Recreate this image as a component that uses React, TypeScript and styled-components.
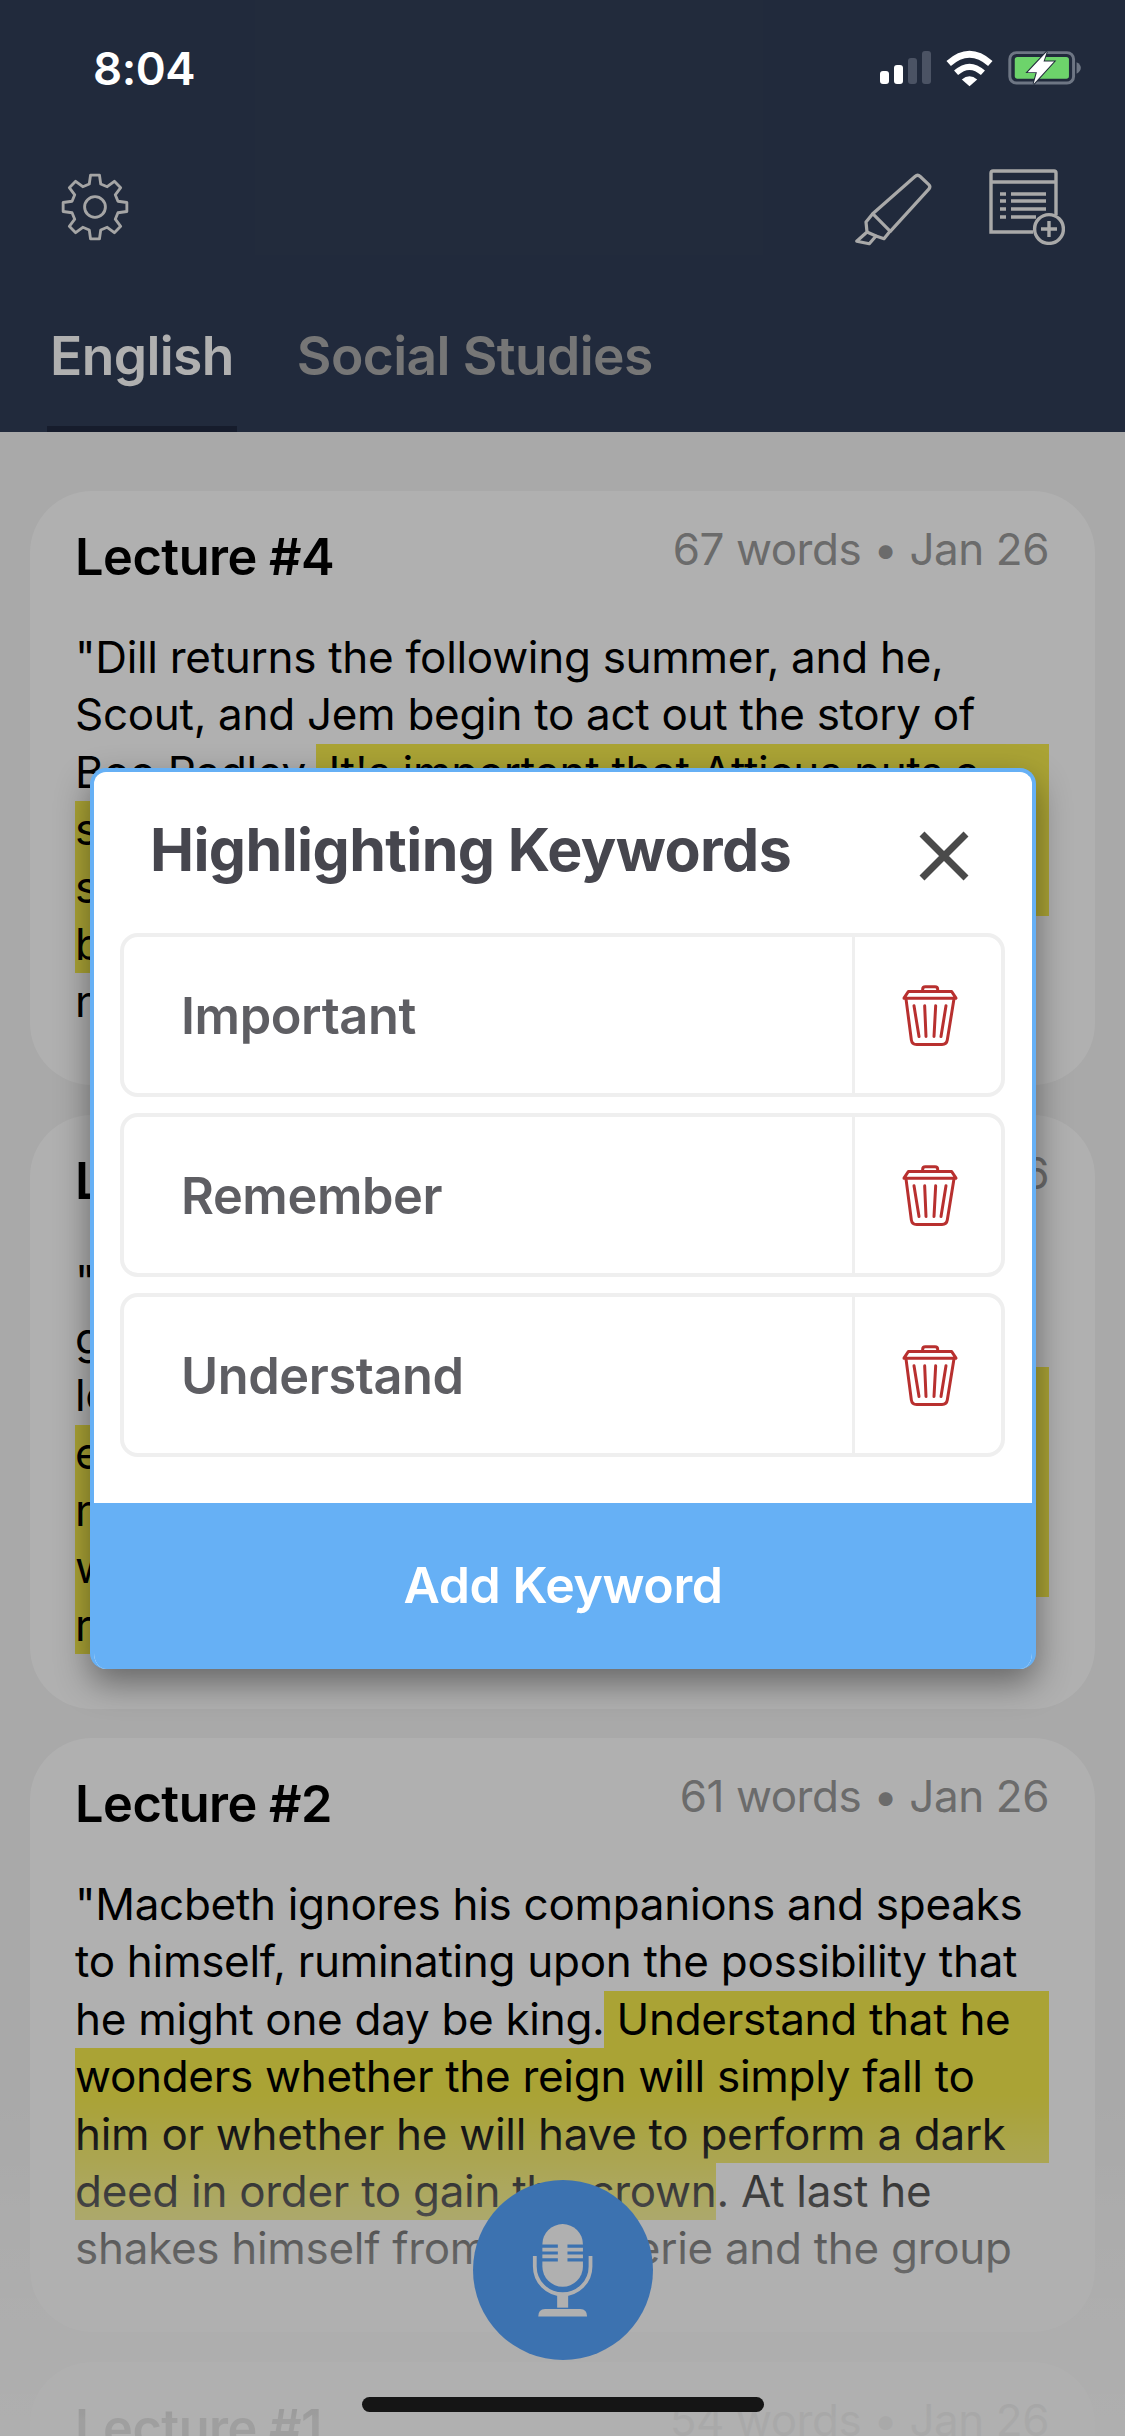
import styled, { createGlobalStyle } from "styled-components";

const FONT = `Inter, "Noto Sans", sans-serif`;

const GlobalStyle = createGlobalStyle`
  html, body {
    margin: 0;
    padding: 0;
    background: #f5f5f5;
    font-family: ${FONT};
  }
`;

const Screen = styled.div`
  position: relative;
  width: 1125px;
  height: 2436px;
  overflow: hidden;
  background: #f5f5f5;
`;

const Header = styled.header`
  height: 432px;
  background: #313e57;
`;

const StatusBar = styled.div`
  position: relative;
  z-index: 3;
  height: 136px;
  display: flex;
  align-items: center;
  justify-content: space-between;
  padding: 0 43px 0 93px;
  color: #fff;
`;

const Time = styled.span`
  font-size: 45.5px;
  font-weight: 600;
  letter-spacing: -0.5px;
`;

const StatusIcons = styled.div`
  display: flex;
  align-items: center;
  gap: 14px;
`;

const Toolbar = styled.div`
  height: 142px;
  display: flex;
  align-items: center;
  justify-content: space-between;
  padding: 0 60px;
`;

const ToolGroup = styled.div`
  display: flex;
  align-items: center;
  gap: 53px;
`;

const Tabs = styled.nav`
  height: 154px;
  display: flex;
  gap: 57px;
  padding-left: 47px;
`;

const Tab = styled.div<{ $active?: boolean }>`
  display: flex;
  align-items: center;
  padding: 0 3px;
  font-size: 53.3px;
  font-weight: 600;
  letter-spacing: -0.6px;
  color: ${(p) => (p.$active ? "#ffffff" : "#ababab")};
  box-shadow: ${(p) => (p.$active ? "inset 0 -6px 0 #202941" : "none")};
`;

const CardList = styled.main`
  display: flex;
  flex-direction: column;
  gap: 29.5px;
  padding: 59px 30px 0;
`;

const Card = styled.article`
  flex: none;
  height: 594px;
  box-sizing: border-box;
  padding: 0 46px 0 45px;
  background: #ffffff;
  border-radius: 62px;
  overflow: hidden;
`;

const CardHead = styled.div`
  height: 138px;
  display: flex;
  justify-content: space-between;
`;

const CardTitle = styled.h2`
  margin: 37px 0 0;
  font-size: 50.5px;
  line-height: 57px;
  font-weight: 600;
  letter-spacing: -0.5px;
  color: #000;
`;

const CardMeta = styled.span`
  margin-top: 30px;
  font-size: 44px;
  line-height: 57px;
  letter-spacing: -0.45px;
  color: #9b9b9b;
`;

const Line = styled.div`
  display: flex;
  height: 57.4px;
  font-size: 44px;
  line-height: 57.4px;
  letter-spacing: -0.3px;
  white-space: pre;
  color: #000;
`;

const Mark = styled.span<{ $fill?: boolean }>`
  background: #f6ec4e;
  flex: ${(p) => (p.$fill ? "1" : "none")};
`;

const BottomFade = styled.div`
  position: absolute;
  left: 0;
  right: 0;
  bottom: 0;
  height: 340px;
  background: linear-gradient(
    to bottom,
    rgba(255, 255, 255, 0) 0%,
    rgba(255, 255, 255, 0.55) 45%,
    rgba(255, 255, 255, 0.9) 95%
  );
`;

const MicButton = styled.div`
  position: absolute;
  left: 473px;
  top: 2180px;
  width: 180px;
  height: 180px;
  border-radius: 50%;
  background: #58a5ff;
  display: flex;
  align-items: center;
  justify-content: center;
`;

const Dim = styled.div`
  position: absolute;
  inset: 0;
  z-index: 2;
  background: rgba(0, 0, 0, 0.31);
`;

const Modal = styled.section`
  position: absolute;
  z-index: 3;
  left: 90px;
  top: 768px;
  width: 946px;
  height: 901px;
  box-sizing: border-box;
  display: flex;
  flex-direction: column;
  background: #fff;
  border: 4px solid #66b0f5;
  border-bottom: none;
  border-radius: 16px;
  box-shadow: 0 14px 34px rgba(0, 0, 0, 0.42);
  overflow: hidden;
`;

const ModalHead = styled.div`
  height: 161px;
  flex: none;
  display: flex;
  align-items: center;
  justify-content: space-between;
  padding: 0 63px 0 56px;
`;

const ModalTitle = styled.h1`
  margin: -6px 0 0;
  font-size: 59px;
  font-weight: 700;
  letter-spacing: -0.6px;
  color: #46464e;
`;

const CloseWrap = styled.div`
  display: flex;
  margin-top: 6px;
`;

const KeywordList = styled.div`
  flex: 1;
  display: flex;
  flex-direction: column;
  gap: 16px;
  padding: 0 27px 0 26px;
`;

const KeywordRow = styled.div`
  height: 164px;
  box-sizing: border-box;
  display: flex;
  border: 4px solid #efefef;
  border-radius: 18px;
`;

const KeywordName = styled.div`
  flex: 1;
  display: flex;
  align-items: center;
  padding-left: 57px;
  font-size: 50.5px;
  font-weight: 600;
  letter-spacing: -0.4px;
  color: #5e5e63;
`;

const TrashCell = styled.div`
  width: 149px;
  flex: none;
  box-sizing: border-box;
  padding-left: 3px;
  display: flex;
  align-items: center;
  justify-content: center;
  border-left: 3px solid #efefef;
`;

const AddButton = styled.button`
  flex: none;
  height: 166px;
  margin: 0 -4px;
  padding: 0 0 2px;
  border: none;
  background: #66b0f5;
  color: #fff;
  font-family: ${FONT};
  font-size: 50px;
  font-weight: 600;
  letter-spacing: -0.4px;
`;

const HomeIndicator = styled.div`
  position: absolute;
  z-index: 3;
  left: 362px;
  top: 2397px;
  width: 402px;
  height: 15px;
  border-radius: 8px;
  background: #151515;
`;

type Segment = { text: string; marked?: boolean; fill?: boolean };
type Lecture = { title: string; meta: string; lines: Segment[][] };

const lectures: Lecture[] = [
  {
    title: "Lecture #4",
    meta: "67 words • Jan 26",
    lines: [
      [{ text: '"Dill returns the following summer, and he,' }],
      [{ text: "Scout, and Jem begin to act out the story of" }],
      [{ text: "Boo Radley." }, { text: " It's important that Atticus puts a", marked: true, fill: true }],
      [{ text: "stop to their antics, urging the children to", marked: true, fill: true }],
      [{ text: "see life from another person's perspective", marked: true, fill: true }],
      [{ text: "before making judgments.", marked: true }, { text: " But, on Dill's last" }],
      [{ text: "night in Maycomb for the summer, the three" }],
    ],
  },
  {
    title: "Lecture #3",
    meta: "72 words • Jan 26",
    lines: [
      [{ text: '"Scout and Jem find small presents in a tree' }],
      [{ text: "gradually, and the children begin to wonder" }],
      [{ text: "long after." }, { text: " Remember that the hole in the", marked: true, fill: true }],
      [{ text: "end of the tree is filled with cement by Nathan,", marked: true, fill: true }],
      [{ text: "not long before a neighbor's house catches", marked: true, fill: true }],
      [{ text: "while the whole street stands out in the cold", marked: true, fill: true }],
      [{ text: "reading the fire.", marked: true }, { text: " Someone covers Scout" }],
    ],
  },
  {
    title: "Lecture #2",
    meta: "61 words • Jan 26",
    lines: [
      [{ text: '"Macbeth ignores his companions and speaks' }],
      [{ text: "to himself, ruminating upon the possibility that" }],
      [{ text: "he might one day be king." }, { text: " Understand that he", marked: true, fill: true }],
      [{ text: "wonders whether the reign will simply fall to", marked: true, fill: true }],
      [{ text: "him or whether he will have to perform a dark", marked: true, fill: true }],
      [{ text: "deed in order to gain the crown", marked: true }, { text: ". At last he" }],
      [{ text: "shakes himself from his reverie and the group" }],
    ],
  },
  {
    title: "Lecture #1",
    meta: "54 words • Jan 26",
    lines: [],
  },
];

const keywords = ["Important", "Remember", "Understand"];

// gear outline: 8 flat teeth around a 25px root circle
const gearPath = (() => {
  const pts: string[] = [];
  for (let i = 0; i < 8; i++) {
    const a = i * 45 - 90;
    const at = (r: number, deg: number) => {
      const t = ((a + deg) * Math.PI) / 180;
      return `${(37 + r * Math.cos(t)).toFixed(2)} ${(37 + r * Math.sin(t)).toFixed(2)}`;
    };
    pts.push(at(25, -14), at(34, -8), at(34, 8), at(25, 14));
  }
  return `M${pts.join("L")}Z`;
})();

function GearIcon() {
  return (
    <svg width="70" height="70" viewBox="0 0 74 74" fill="none" stroke="#f0f0f0" strokeWidth="3" strokeLinejoin="round">
      <path d={gearPath} />
      <circle cx="37" cy="37" r="11" />
    </svg>
  );
}

function HighlighterIcon() {
  return (
    <svg width="85" height="80" viewBox="0 0 85 80" fill="none" stroke="#f5f5f5" strokeWidth="3.2" strokeLinejoin="round">
      <path d="M21.7 46.7 64 9.5q2.7-2.4 5.2 0l8.6 8.2q2 2 .2 4.2L39.3 64.3Z" />
      <path d="M21.7 46.7 15 55l1 10-10.3 9.3 12.6 2.4 6.7-7.7 8 2.7 6-7.4" />
      <path d="M16 65 25 69" />
    </svg>
  );
}

function NoteAddIcon() {
  return (
    <svg width="76" height="76" viewBox="0 0 76 76" fill="none" stroke="#f5f5f5" strokeWidth="3.4">
      <path d="M2 47V4q0-2 2-2h61q2 0 2 2v42M2 47v16h42" />
      <path d="M2 13h65" />
      <path d="M11 25h6M22 25h35M11 32h6M22 32h35M11 40h6M22 40h35M11 48h6M22 48h25" />
      <circle cx="60" cy="60" r="14.4" />
      <path d="M60 52v16M52 60h16" />
    </svg>
  );
}

function SignalIcon() {
  return (
    <svg width="52" height="34" viewBox="0 0 52 34">
      <rect x="0" y="20" width="9" height="13" rx="3" fill="#fff" />
      <rect x="14" y="14" width="9" height="19" rx="3" fill="#fff" />
      <rect x="28" y="7" width="9" height="26" rx="3" fill="#4b5364" />
      <rect x="42" y="0" width="9" height="33" rx="3" fill="#4b5364" />
    </svg>
  );
}

function WifiIcon() {
  return (
    <svg width="47" height="37" viewBox="380 60 140 110" fill="none" stroke="#fff">
      <path d="M388 100Q450 45 512 100" strokeWidth="20" />
      <path d="M410 128Q450 92 490 128" strokeWidth="18" />
      <path d="M427 148Q450 128 473 148L450 168Z" fill="#fff" stroke="none" />
    </svg>
  );
}

function BatteryIcon() {
  return (
    <svg width="75" height="38" viewBox="560 60 226 115">
      <rect x="568" y="71" width="193" height="92" rx="20" fill="none" stroke="#6e7684" strokeWidth="9" />
      <rect x="583" y="84" width="164" height="66" rx="8" fill="#6dd36b" />
      <path d="M770 100q13 6 13 17t-13 18Z" fill="#6e7684" />
      <path
        d="M680 68 622 130h28l-10 36 62-68h-32Z"
        fill="#fff"
        stroke="#222b3c"
        strokeWidth="6"
        paintOrder="stroke"
      />
    </svg>
  );
}

function CloseIcon() {
  return (
    <svg width="50" height="50" viewBox="0 0 50 50" stroke="#4a4a4a" strokeWidth="7">
      <path d="M3 3 47 47M47 3 3 47" />
    </svg>
  );
}

function TrashIcon() {
  return (
    <svg width="60" height="67" viewBox="180 155 180 200" fill="none" stroke="#b8302f" strokeWidth="9" strokeLinejoin="round" strokeLinecap="round">
      <path d="M248 183v-7q0-7 8-7h29q8 0 8 7v7" />
      <path d="M205 183h130l13 20H192Z" />
      <path d="M198 205 214 328q2 14 16 14h76q14 0 16-14l20-123" />
      <path d="M222 226 237 318M254 226 258 318M287 226 282 318M318 226 303 318" />
    </svg>
  );
}

function MicIcon() {
  return (
    <svg width="62" height="98" viewBox="280 190 180 285">
      <path
        d="M310 262V258a59 59 0 0 1 118 0V322a59 59 0 0 1-118 0Z"
        fill="#ffffff"
      />
      <path d="M305 263h50M305 283h50M305 303h50M383 263h50M383 283h50M383 303h50" stroke="#58a5ff" strokeWidth="9" />
      <path d="M288 292v30a81 81 0 0 0 162 0v-30" fill="none" stroke="#ffffff" strokeWidth="11" />
      <rect x="353" y="400" width="32" height="42" fill="#ffffff" />
      <path d="M298 468q0-22 20-22h102q20 0 20 22Z" fill="#ffffff" />
    </svg>
  );
}

export default function App() {
  return (
    <Screen>
      <GlobalStyle />
      <Header>
        <StatusBar>
          <Time>8:04</Time>
          <StatusIcons>
            <SignalIcon />
            <WifiIcon />
            <BatteryIcon />
          </StatusIcons>
        </StatusBar>
        <Toolbar>
          <GearIcon />
          <ToolGroup>
            <HighlighterIcon />
            <NoteAddIcon />
          </ToolGroup>
        </Toolbar>
        <Tabs>
          <Tab $active>English</Tab>
          <Tab>Social Studies</Tab>
        </Tabs>
      </Header>

      <CardList>
        {lectures.map((lecture) => (
          <Card key={lecture.title}>
            <CardHead>
              <CardTitle>{lecture.title}</CardTitle>
              <CardMeta>{lecture.meta}</CardMeta>
            </CardHead>
            {lecture.lines.map((line, i) => (
              <Line key={i}>
                {line.map((seg, j) =>
                  seg.marked ? (
                    <Mark key={j} $fill={seg.fill}>{seg.text}</Mark>
                  ) : (
                    <span key={j}>{seg.text}</span>
                  )
                )}
              </Line>
            ))}
          </Card>
        ))}
      </CardList>

      <BottomFade />
      <MicButton>
        <MicIcon />
      </MicButton>
      <Dim />

      <Modal>
        <ModalHead>
          <ModalTitle>Highlighting Keywords</ModalTitle>
          <CloseWrap>
            <CloseIcon />
          </CloseWrap>
        </ModalHead>
        <KeywordList>
          {keywords.map((word) => (
            <KeywordRow key={word}>
              <KeywordName>{word}</KeywordName>
              <TrashCell>
                <TrashIcon />
              </TrashCell>
            </KeywordRow>
          ))}
        </KeywordList>
        <AddButton>Add Keyword</AddButton>
      </Modal>

      <HomeIndicator />
    </Screen>
  );
}
